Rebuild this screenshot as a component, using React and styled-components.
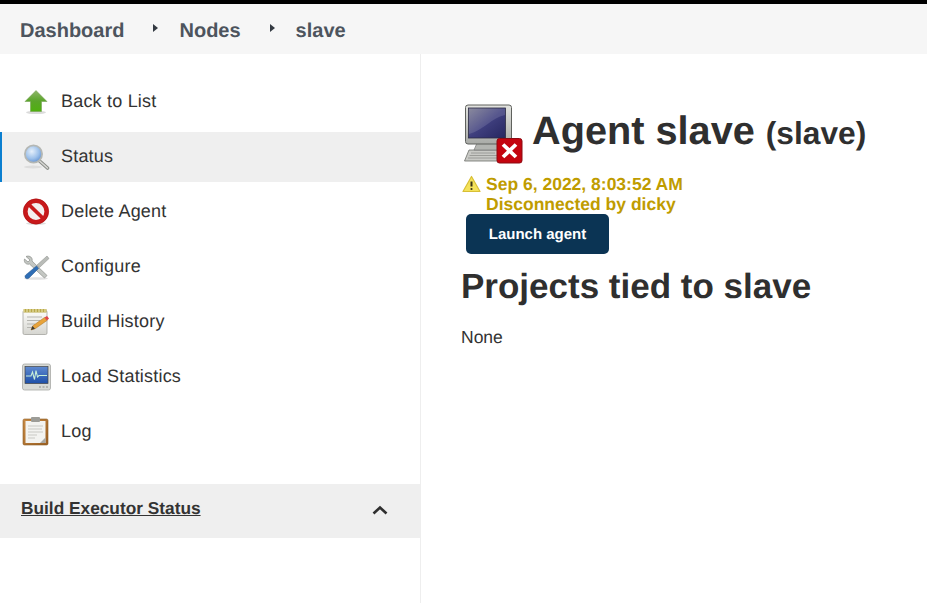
import React from "react";
import styled, { createGlobalStyle } from "styled-components";

const Global = createGlobalStyle`
  html, body { margin: 0; padding: 0; background: #fff; }
  body {
    font-family: "Liberation Sans", Arial, sans-serif;
    color: #333;
    text-rendering: geometricPrecision;
  }
  * { box-sizing: border-box; }
`;

const Page = styled.div`
  width: 927px;
  height: 603px;
  overflow: hidden;
  display: flex;
  flex-direction: column;
  border-top: 4px solid #000;
`;

const Crumbs = styled.nav`
  height: 50px;
  flex: none;
  background: #f6f6f6;
  display: flex;
  align-items: center;
  padding: 3px 0 0 20px;
  color: #4d545d;
  font-size: 20px;
  font-weight: 700;
`;

const Crumb = styled.span`
  line-height: 46px;
`;

const Caret = styled.span`
  width: 0;
  height: 0;
  margin: -6px 21px 0 ${(p) => p.$left}px;
  border-left: 5px solid #333a42;
  border-top: 4px solid transparent;
  border-bottom: 4px solid transparent;
`;

const Body = styled.div`
  flex: 1;
  display: flex;
  min-height: 0;
`;

const Side = styled.aside`
  width: 421px;
  flex: none;
  border-right: 1px solid #eee;
  padding-top: 23px;
`;

const Tasks = styled.ul`
  list-style: none;
  margin: 0;
  padding: 0;
  display: flex;
  flex-direction: column;
  gap: 5px;
`;

const Task = styled.li`
  height: 50px;
  display: flex;
  align-items: center;
  gap: 11px;
  padding-left: 22px;
  font-size: 18px;
  letter-spacing: 0.2px;
  color: #333;
  background: ${(p) => (p.$active ? "#efefef" : "transparent")};
  box-shadow: ${(p) => (p.$active ? "inset 2px 0 0 #0b7fd0" : "none")};
  svg { flex: none; display: block; }
`;

const TaskLabel = styled.span`
  margin-top: -2px;
`;

const Panel = styled.div`
  height: 54px;
  margin-top: 27px;
  background: #efefef;
  display: flex;
  align-items: center;
  justify-content: space-between;
  padding: 0 32px 0 21px;
  font-size: 17.3px;
  font-weight: 700;
  color: #333;
  svg { display: block; margin-top: -2px; }
`;

const PanelLink = styled.span`
  text-decoration: underline;
  margin-top: -6px;
`;

const Main = styled.main`
  flex: 1;
  padding: 48px 0 0 40px;
  color: #2f2f2f;
`;

const Title = styled.div`
  display: flex;
  align-items: center;
  height: 60px;
  margin-left: 3px;
  gap: 8px;
  white-space: nowrap;
  svg { flex: none; margin-top: 4px; }
`;

const TitleText = styled.h1`
  margin: 0;
  font-size: 39.7px;
  line-height: 48px;
  font-weight: 700;
  color: #2f2f2f;
`;

const TitleSub = styled.span`
  font-size: 31.7px;
`;

const Offline = styled.div`
  display: flex;
  gap: 5px;
  margin: 12px 0 0 1px;
  color: #bf9c00;
  font-size: 17.5px;
  font-weight: 700;
  line-height: 20px;
  svg { flex: none; margin-top: 1px; }
`;

const LaunchButton = styled.button`
  display: block;
  width: 143px;
  height: 40px;
  margin: 0 0 0 5px;
  padding: 1px 0 0;
  border: 0;
  border-radius: 5px;
  background: #0b3454;
  color: #fff;
  font: 700 15px "Liberation Sans", Arial, sans-serif;
  text-rendering: geometricPrecision;
`;

const Projects = styled.h2`
  margin: 12px 0 0;
  font-size: 35px;
  line-height: 42px;
  font-weight: 700;
  color: #2f2f2f;
`;

const Note = styled.p`
  margin: 18px 0 0;
  font-size: 17.5px;
  line-height: 22px;
  color: #333;
`;

const ArrowIcon = () => (
  <svg width="28" height="28" viewBox="0 0 28 28">
    <defs>
      <linearGradient id="ag" x1="0" y1="0" x2="0" y2="1">
        <stop offset="0" stopColor="#8fb56a" />
        <stop offset=".5" stopColor="#5aa52a" />
        <stop offset="1" stopColor="#4fb00e" />
      </linearGradient>
    </defs>
    <ellipse cx="14" cy="24.5" rx="10" ry="1.6" fill="#ccc" opacity=".7" />
    <path d="M14 2.5 L25 13.5 H19.5 V23.5 H8.5 V13.5 H3 Z" fill="url(#ag)" stroke="#6c9a4a" strokeWidth=".5" />
  </svg>
);

const SearchIcon = () => (
  <svg width="28" height="28" viewBox="0 0 28 28">
    <defs>
      <radialGradient id="sg" cx=".4" cy=".35" r=".7">
        <stop offset="0" stopColor="#e6f0fb" />
        <stop offset=".6" stopColor="#9cc0ea" />
        <stop offset="1" stopColor="#5f8fd0" />
      </radialGradient>
    </defs>
    <ellipse cx="11" cy="24" rx="9" ry="1.5" fill="#ddd" />
    <path d="M17 17.5 L25.5 25" stroke="#8a8d88" strokeWidth="3.6" strokeLinecap="round" />
    <path d="M17 17.5 L25.5 25" stroke="#d8d8d5" strokeWidth="1.6" strokeLinecap="round" />
    <circle cx="11.5" cy="11" r="8.6" fill="url(#sg)" stroke="#b4b7b4" strokeWidth="1.8" />
  </svg>
);

const DeleteIcon = () => (
  <svg width="28" height="28" viewBox="0 0 28 28">
    <ellipse cx="14" cy="25.5" rx="10" ry="1.3" fill="#ddd" />
    <circle cx="14" cy="13.5" r="10.6" fill="#f4efef" stroke="#c8191b" strokeWidth="4.4" />
    <path d="M6.8 6.5 L21.2 20.5" stroke="#c8191b" strokeWidth="3.8" />
    <circle cx="14" cy="13.5" r="12.6" fill="none" stroke="#a81012" strokeWidth=".6" />
  </svg>
);

const ConfigIcon = () => (
  <svg width="28" height="28" viewBox="0 0 28 28">
    <ellipse cx="14" cy="25.5" rx="12" ry="1.3" fill="#e2e2e2" />
    <path d="M4 3.5 C8 2 11 5 10 8 L25 22.5 L22.5 25 L7.5 11 C4.5 12 1.5 9.5 2.5 6 L6 9 L8 7 Z" fill="#c4c7c3" stroke="#8b8e8a" strokeWidth=".7" />
    <path d="M25 3 L27 5.5 L17.5 14.5 L15 12 Z" fill="#b9bcb8" stroke="#888b87" strokeWidth=".5" />
    <path d="M14.5 13 L16.5 15.5 L7 25 C5.5 26.3 3 25.8 3 23.5 C3 22.8 3.4 22.2 4 21.7 Z" fill="#2f6eb5" stroke="#1f4f88" strokeWidth=".5" />
  </svg>
);

const HistoryIcon = () => (
  <svg width="28" height="28" viewBox="0 0 28 28">
    <defs>
      <linearGradient id="hg" x1="0" y1="0" x2="0" y2="1">
        <stop offset="0" stopColor="#fdfdfb" />
        <stop offset="1" stopColor="#d5d5d0" />
      </linearGradient>
    </defs>
    <rect x="1" y="2.5" width="24" height="24" rx="1.5" fill="url(#hg)" stroke="#a3a39e" strokeWidth=".8" />
    <rect x="1.5" y="1" width="23" height="3.5" fill="#b9a94a" />
    <path d="M2 1 V4 M5 1 V4 M8 1 V4 M11 1 V4 M14 1 V4 M17 1 V4 M20 1 V4 M23 1 V4" stroke="#efe9b8" strokeWidth="1" />
    <path d="M5 9 H20 M5 12.5 H18 M5 16 H13 M5 19.5 H10" stroke="#b5b5b0" strokeWidth="1.2" />
    <path d="M9 22 L10.5 18 L22.5 9.5 L25 12.5 L13 20.8 Z" fill="#e8a33a" stroke="#a66f1c" strokeWidth=".5" />
    <path d="M22.5 9.5 L25 12.5 L27 10.5 L25 8 Z" fill="#e0474a" />
    <path d="M9 22 L10.5 18 L13 20.8 Z" fill="#3a3a36" />
  </svg>
);

const LoadIcon = () => (
  <svg width="30" height="28" viewBox="0 0 30 28" style={{ marginRight: -2 }}>
    <defs>
      <linearGradient id="lg" x1="0" y1="0" x2="0" y2="1">
        <stop offset="0" stopColor="#5f8ad0" />
        <stop offset="1" stopColor="#1d4fa8" />
      </linearGradient>
    </defs>
    <rect x="0.5" y="1" width="28" height="26" rx="2" fill="#d8dad6" stroke="#a8aaa6" strokeWidth=".8" />
    <rect x="3" y="3.5" width="23" height="17" fill="url(#lg)" stroke="#444" strokeWidth=".7" />
    <path d="M4 13 H9 L10.5 9 L12.5 16.5 L14 7.5 L15.5 14 L17 12.5 H25" fill="none" stroke="#c8f0d8" strokeWidth="1.1" />
    <path d="M17 24 H19 M20.5 24 H22.5 M24 24 H26" stroke="#8d8f8b" strokeWidth="1.2" />
  </svg>
);

const LogIcon = () => (
  <svg width="28" height="30" viewBox="0 0 28 30" style={{ marginTop: -2 }}>
    <defs>
      <linearGradient id="cg" x1="0" y1="0" x2="1" y2="1">
        <stop offset="0" stopColor="#c98b45" />
        <stop offset="1" stopColor="#9a5f22" />
      </linearGradient>
    </defs>
    <rect x="1" y="3" width="25" height="26" rx="1.5" fill="url(#cg)" stroke="#8a5a24" strokeWidth=".6" />
    <rect x="3.5" y="5" width="20" height="22" fill="#f3f3f0" />
    <path d="M18 27 L23.5 21.5 V27 Z" fill="#a8a8a4" />
    <rect x="9" y="1" width="9" height="5" rx="1" fill="#9c9c97" />
    <path d="M6 10 H21 M6 13 H20 M6 16 H21 M6 19 H15 M6 22 H13" stroke="#c9c9c4" strokeWidth="1.1" />
  </svg>
);

const ComputerIcon = () => (
  <svg width="60" height="60" viewBox="0 0 60 60">
    <defs>
      <linearGradient id="mg" x1="0" y1="0" x2="1" y2="1">
        <stop offset="0" stopColor="#7a7a90" />
        <stop offset=".5" stopColor="#3f3f7e" />
        <stop offset="1" stopColor="#262660" />
      </linearGradient>
      <linearGradient id="bg" x1="0" y1="0" x2="0" y2="1">
        <stop offset="0" stopColor="#e3e4e0" />
        <stop offset="1" stopColor="#a9aba7" />
      </linearGradient>
    </defs>
    <path d="M5 46 H37 L46 57 H0.5 Z" fill="#c9cac6" stroke="#6d6f6b" strokeWidth=".8" />
    <path d="M7 49 H31 M5.5 51.5 H33 M4 54 H35" stroke="#8f918d" strokeWidth=".8" />
    <path d="M13 39 H33 L36 46 H10 Z" fill="#b3b5b1" stroke="#777" strokeWidth=".7" />
    <rect x="1.5" y="1" width="46" height="39" rx="2.5" fill="url(#bg)" stroke="#5f615d" strokeWidth="1" />
    <rect x="4.5" y="4" width="37" height="30" fill="url(#mg)" stroke="#2c2c44" strokeWidth=".8" />
    <path d="M5 30 C20 26 27 14 41 11 V4.5 H5 Z" fill="#fff" opacity=".13" />
    <rect x="33" y="34.5" width="25" height="24.5" rx="2.5" fill="#c4040f" stroke="#8c0a12" strokeWidth="1" />
    <path d="M39 40.5 L52 53 M52 40.5 L39 53" stroke="#fff" strokeWidth="3.8" />
  </svg>
);

const WarnIcon = () => (
  <svg width="19" height="18" viewBox="0 0 19 18">
    <path d="M9.5 1.5 L18 16.5 H1 Z" fill="#f4e25a" stroke="#d8bf35" strokeWidth="1.2" strokeLinejoin="round" />
    <path d="M9.5 6.5 V11.5" stroke="#3a3416" strokeWidth="2" />
    <circle cx="9.5" cy="14" r="1.1" fill="#3a3416" />
  </svg>
);

const ChevronUp = () => (
  <svg width="16" height="10" viewBox="0 0 16 10">
    <path d="M1.5 8.5 L8 2.5 L14.5 8.5" fill="none" stroke="#2f2f2f" strokeWidth="2.6" />
  </svg>
);

const tasks = [
  { label: "Back to List", Icon: ArrowIcon },
  { label: "Status", Icon: SearchIcon, active: true },
  { label: "Delete Agent", Icon: DeleteIcon },
  { label: "Configure", Icon: ConfigIcon },
  { label: "Build History", Icon: HistoryIcon },
  { label: "Load Statistics", Icon: LoadIcon },
  { label: "Log", Icon: LogIcon },
];

export default function App() {
  return (
    <Page>
      <Global />
      <Crumbs>
        <Crumb>Dashboard</Crumb>
        <Caret $left={29} />
        <Crumb>Nodes</Crumb>
        <Caret $left={29} />
        <Crumb>slave</Crumb>
      </Crumbs>
      <Body>
        <Side>
          <Tasks>
            {tasks.map(({ label, Icon, active }) => (
              <Task key={label} $active={active}>
                <Icon />
                <TaskLabel>{label}</TaskLabel>
              </Task>
            ))}
          </Tasks>
          <Panel>
            <PanelLink>Build Executor Status</PanelLink>
            <ChevronUp />
          </Panel>
        </Side>
        <Main>
          <Title>
            <ComputerIcon />
            <TitleText>
              Agent slave <TitleSub>(slave)</TitleSub>
            </TitleText>
          </Title>
          <Offline>
            <WarnIcon />
            <div>
              Sep 6, 2022, 8:03:52 AM
              <br />
              Disconnected by dicky
            </div>
          </Offline>
          <LaunchButton>Launch agent</LaunchButton>
          <Projects>Projects tied to slave</Projects>
          <Note>None</Note>
        </Main>
      </Body>
    </Page>
  );
}
